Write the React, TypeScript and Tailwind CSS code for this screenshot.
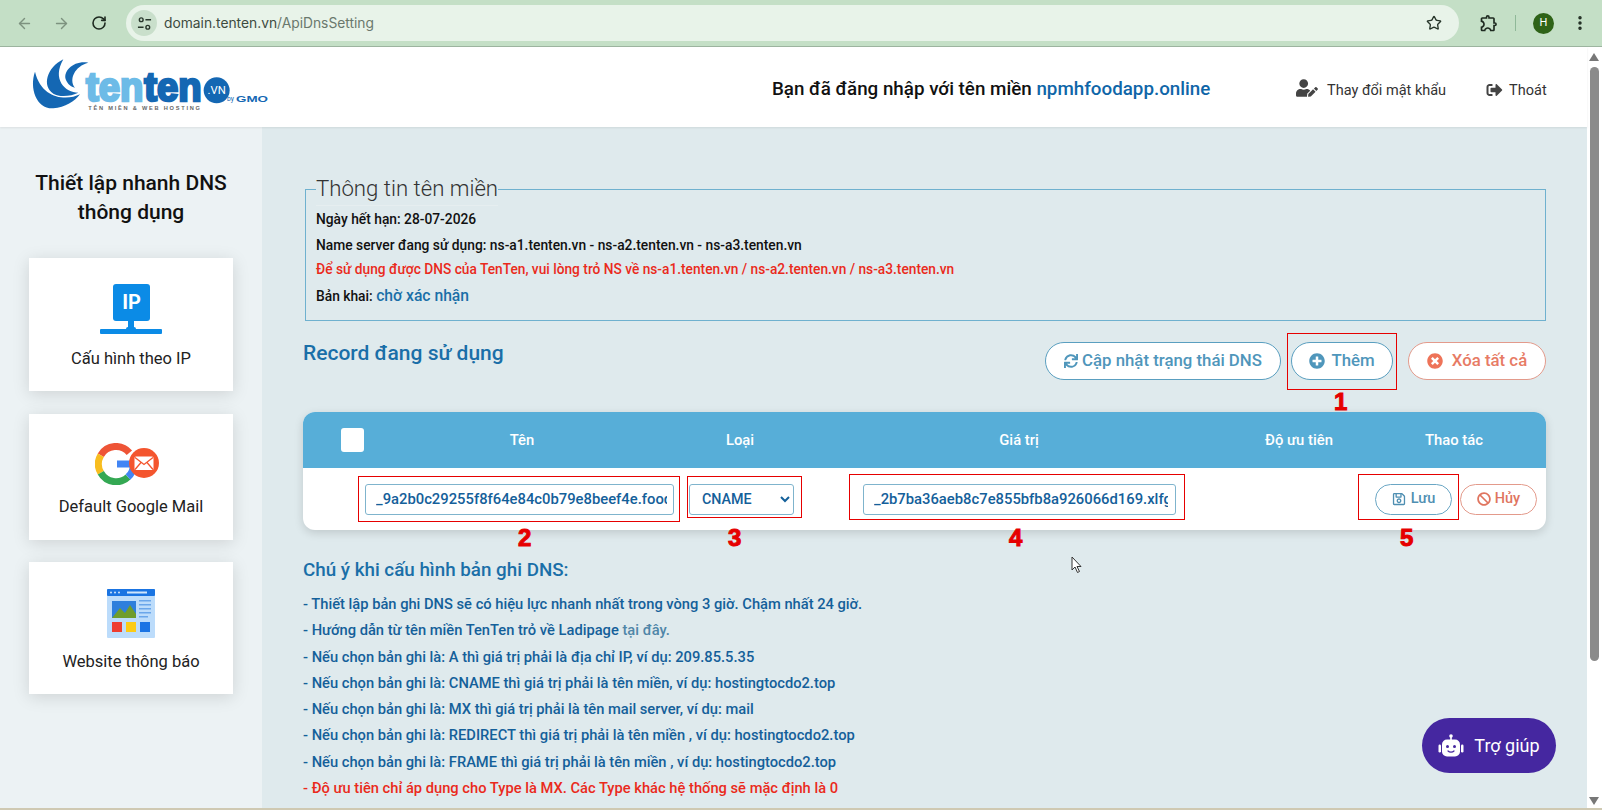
import { ArrowLeft, ArrowRight, EllipsisVertical, RotateCw, Star } from "lucide-react";
import { FaBan, FaPlusCircle, FaRegSave, FaSignOutAlt, FaSync, FaTimesCircle, FaUserEdit } from "react-icons/fa";
import { MdOutlineExtension } from "react-icons/md";

const notes = [
  "- Thiết lập bản ghi DNS sẽ có hiệu lực nhanh nhất trong vòng 3 giờ. Chậm nhất 24 giờ.",
  "- Nếu chọn bản ghi là: A thì giá trị phải là địa chỉ IP, ví dụ: 209.85.5.35",
  "- Nếu chọn bản ghi là: CNAME thì giá trị phải là tên miền, ví dụ: hostingtocdo2.top",
  "- Nếu chọn bản ghi là: MX thì giá trị phải là tên mail server, ví dụ: mail",
  "- Nếu chọn bản ghi là: REDIRECT thì giá trị phải là tên miền , ví dụ: hostingtocdo2.top",
  "- Nếu chọn bản ghi là: FRAME thì giá trị phải là tên miền , ví dụ: hostingtocdo2.top",
];

const marks = [
  { n: "1", box: "left-[1287px] top-[333px] w-[110px] h-[57px]", num: "left-[1334px] top-[388px]" },
  { n: "2", box: "left-[358px] top-[476px] w-[322px] h-[46px]", num: "left-[518px] top-[524px]" },
  { n: "3", box: "left-[687px] top-[476px] w-[115px] h-[42px]", num: "left-[728px] top-[524px]" },
  { n: "4", box: "left-[849px] top-[474px] w-[336px] h-[46px]", num: "left-[1009px] top-[524px]" },
  { n: "5", box: "left-[1358px] top-[474px] w-[101px] h-[46px]", num: "left-[1400px] top-[524px]" },
];

function Logo() {
  return (
    <svg viewBox="0 0 750 195" className="w-[250px] h-[65px] mb-[13px]">
      <path d="M30 62C12 112 35 175 85 172C120 170 150 150 165 130C125 150 50 145 30 62Z" fill="#1467b3" />
      <path d="M115 25C65 50 50 105 85 128C105 140 140 135 160 125C120 125 80 85 115 25Z" fill="#1467b3" />
      <path d="M190 35C145 28 115 60 122 85C128 100 138 108 150 110C130 85 150 45 190 35Z" fill="#1467b3" />
      <text x="183" y="150" fontFamily="Liberation Sans" fontWeight="700" fontSize="122" textLength="172" lengthAdjust="spacingAndGlyphs" fill="#6dbbe7" stroke="#6dbbe7" strokeWidth="8">ten</text>
      <text x="358" y="150" fontFamily="Liberation Sans" fontWeight="700" fontSize="122" textLength="172" lengthAdjust="spacingAndGlyphs" fill="#1467b3" stroke="#1467b3" strokeWidth="8">ten</text>
      <circle cx="575" cy="118" r="39" fill="#1467b3" />
      <text x="575" y="130" textAnchor="middle" fontFamily="Roboto" fontSize="34" fill="#fff">.VN</text>
      <text x="606" y="151" fontFamily="Roboto" fontSize="20" fill="#1467b3">by</text>
      <text x="633" y="152" fontFamily="Liberation Sans" fontWeight="700" fontSize="29" textLength="96" lengthAdjust="spacingAndGlyphs" fill="#1467b3">GMO</text>
      <text x="190" y="178" fontFamily="Liberation Sans" fontWeight="700" fontSize="17" textLength="335" fill="#666">TÊN MIỀN & WEB HOSTING</text>
    </svg>
  );
}

function IpIcon() {
  return (
    <svg viewBox="0 0 62 50" className="w-[62px] h-[50px]">
      <rect x="13" y="0" width="37" height="37" rx="3" fill="#0b8be6" />
      <text x="31.5" y="25" textAnchor="middle" fontFamily="Roboto" fontWeight="700" fontSize="20" fill="#fff">IP</text>
      <rect x="28" y="36" width="6" height="10" fill="#0b8be6" />
      <rect x="0" y="45" width="62" height="5" rx="1" fill="#0b8be6" />
      <rect x="26" y="43" width="10" height="7" rx="2" fill="#0b8be6" />
    </svg>
  );
}

function GoogleMailIcon() {
  return (
    <svg viewBox="0 0 64 42" className="w-[64px] h-[42px] -ml-[8px]">
      <path d="M5.800 12.200A17.500 17.500 0 0 1 34.400 9.800" fill="none" stroke="#ee5436" strokeWidth="7" />
      <path d="M5.800 29.800A17.500 17.500 0 0 1 5.800 12.200" fill="none" stroke="#f8bd1f" strokeWidth="7" />
      <path d="M5.800 29.800A17.500 17.500 0 0 0 33 34" fill="none" stroke="#34a853" strokeWidth="7" />
      <path d="M22 21H38.500C38.500 27 36.500 31 33 34" fill="none" stroke="#4285f4" strokeWidth="7" />
      <circle cx="49" cy="20" r="15" fill="#f4552e" />
      <rect x="39.500" y="13.500" width="19" height="13.500" rx="1.500" fill="#fff" />
      <path d="M40 14.500L49 21.500L58 14.500M40 26.500L46 19.500M58 26.500L52 19.500" fill="none" stroke="#f4552e" strokeWidth="1.300" />
    </svg>
  );
}

function WebIcon() {
  return (
    <svg viewBox="0 0 48 49" className="w-[48px] h-[49px]">
      <rect width="48" height="49" rx="1" fill="#bcdcfb" />
      <rect width="48" height="7" rx="1" fill="#1a74e2" />
      <circle cx="4" cy="3.500" r="1" fill="#cfe5fb" />
      <circle cx="8" cy="3.500" r="1" fill="#cfe5fb" />
      <circle cx="12" cy="3.500" r="1" fill="#cfe5fb" />
      <rect x="20" y="2.500" width="20" height="2" fill="#cfe5fb" />
      <rect x="5" y="12" width="24" height="17" fill="#2e7fdc" />
      <path d="M5 29L13 19L18 24L23 16L29 25V29Z" fill="#6f9d2c" />
      <rect x="32" y="11" width="12" height="1.500" fill="#6aa6ea" />
      <rect x="32" y="15" width="12" height="1.500" fill="#6aa6ea" />
      <rect x="32" y="19" width="12" height="1.500" fill="#6aa6ea" />
      <rect x="32" y="23" width="12" height="1.500" fill="#6aa6ea" />
      <rect x="32" y="27" width="9" height="1.500" fill="#6aa6ea" />
      <rect x="5" y="33" width="10" height="10" fill="#ee3d2f" />
      <rect x="19" y="33" width="10" height="10" fill="#fbcb16" />
      <rect x="33" y="33" width="10" height="10" fill="#1b74e4" />
    </svg>
  );
}

function BotIcon() {
  return (
    <svg viewBox="0 0 26 24" className="w-[26px] h-[24px]">
      <circle cx="13" cy="2" r="1.800" fill="#fff" />
      <rect x="12.200" y="2" width="1.600" height="4" fill="#fff" />
      <rect x="4" y="5.500" width="18" height="17" rx="5" fill="#fff" />
      <rect x="0.500" y="10.500" width="2.500" height="8" rx="1.200" fill="#fff" />
      <rect x="23" y="10.500" width="2.500" height="8" rx="1.200" fill="#fff" />
      <circle cx="9.500" cy="12.500" r="1.500" fill="#4527a0" />
      <circle cx="16.500" cy="12.500" r="1.500" fill="#4527a0" />
      <path d="M10 17C11.500 18.500 14.500 18.500 16 17" fill="none" stroke="#4527a0" strokeWidth="1.200" strokeLinecap="round" />
    </svg>
  );
}

function SideCard({ label, icon, className }: { label: string; icon: React.ReactNode; className: string }) {
  return (
    <div className={`mx-[29px] w-[204px] bg-white shadow-[0_3px_16px_rgba(0,0,0,0.13)] flex flex-col items-center ${className}`}>
      {icon}
      <span className="text-[16.500px] leading-[24px] text-[#222] whitespace-nowrap">{label}</span>
    </div>
  );
}

export default function App() {
  return (
    <div className="relative h-[810px] overflow-hidden flex flex-col bg-white font-['Roboto',sans-serif]">
      {/* browser bar */}
      <div className="h-[47px] shrink-0 bg-[#c4dfc6] border-b border-[#9db5a0] flex items-center pl-[16px] pr-[13px] text-[#3f4f42]">
        <ArrowLeft className="shrink-0 w-[17px] h-[17px] text-[#7d927f]" />
        <ArrowRight className="shrink-0 w-[17px] h-[17px] ml-[20px] text-[#7d927f]" />
        <RotateCw className="shrink-0 w-[16px] h-[16px] ml-[21px] text-[#1e2a20]" strokeWidth={2.400} />
        <div className="shrink-0 ml-[19px] w-[1333px] h-[36px] rounded-full bg-[#e8f3e9] flex items-center pl-[5px] pr-[17px]">
          <div className="w-[26px] h-[26px] rounded-full bg-[#c9dfcb] flex items-center justify-center">
            <svg viewBox="0 0 16 16" className="w-[15px] h-[15px]" fill="none" stroke="#27352a" strokeWidth="1.500">
              <circle cx="4.500" cy="4" r="2" />
              <path d="M9 4H15M1 12H7" />
              <circle cx="11.500" cy="12" r="2" />
            </svg>
          </div>
          <span className="ml-[7px] text-[13.800px] font-['Inter',sans-serif] text-[#3c4a3f]">
            domain.tenten.vn<span className="text-[#6a786d]">/ApiDnsSetting</span>
          </span>
          <Star className="ml-auto w-[16px] h-[16px] text-[#27352a]" />
        </div>
        <MdOutlineExtension className="shrink-0 ml-[20px] w-[20px] h-[20px] text-[#1e2a20]" />
        <div className="shrink-0 ml-[16px] w-px h-[16px] bg-[#8fb898]" />
        <div className="shrink-0 ml-[17px] w-[21px] h-[21px] rounded-full bg-[#2f6318] text-white text-[11px] flex items-center justify-center">H</div>
        <EllipsisVertical className="shrink-0 ml-[17px] w-[18px] h-[18px] text-[#1e2a20]" strokeWidth={2.600} />
      </div>

      <div className="flex-1 flex min-h-0">
        <div className="flex-1 min-w-0 flex flex-col">
          {/* site header */}
          <header className="h-[80px] shrink-0 bg-white flex items-center pl-[25px] pt-[5px] shadow-[0_1px_2px_rgba(0,0,0,0.08)] relative z-10">
            <Logo />
            <div className="ml-[497px] text-[18.800px] font-medium text-[#111] w-[449px] whitespace-nowrap">
              Bạn đã đăng nhập với tên miền <span className="text-[#0f66a8]">npmhfoodapp.online</span>
            </div>
            <FaUserEdit className="ml-[75px] w-[22px] h-[18px] text-[#444] mb-[4px]" />
            <span className="ml-[9px] mt-[3px] text-[14.500px] text-[#333]">Thay đổi mật khẩu</span>
            <FaSignOutAlt className="ml-[40px] w-[17px] h-[16px] text-[#444]" />
            <span className="ml-[6px] mt-[3px] text-[14.500px] text-[#333]">Thoát</span>
          </header>

          <div className="flex-1 min-h-0 flex">
            {/* left column */}
            <aside className="w-[262px] shrink-0 bg-[#ecf2f4] flex flex-col pt-[42px]">
              <h2 className="text-[21px] leading-[29px] font-medium text-[#111] text-center">
                Thiết lập nhanh DNS<br />thông dụng
              </h2>
              <SideCard label="Cấu hình theo IP" icon={<IpIcon />} className="mt-[31px] h-[133px] pt-[26px] gap-[13px]" />
              <SideCard label="Default Google Mail" icon={<GoogleMailIcon />} className="mt-[23px] h-[126px] pt-[29px] gap-[10px]" />
              <SideCard label="Website thông báo" icon={<WebIcon />} className="mt-[22px] h-[132px] pt-[27px] gap-[12px]" />
            </aside>

            {/* main */}
            <main className="flex-1 min-w-0 bg-[#dfeaed] px-[41px] pt-[46px]">
              <fieldset className="ml-[2px] h-[148px] border border-[#6fb1cf] px-[10px]">
                <legend className="text-[22.200px] leading-[30px] font-light text-[#333] border-b border-[#e6eef0] pb-[2px]">Thông tin tên miền</legend>
                <div className="text-[13.800px] font-medium text-[#111]">
                  <p className="leading-[20px] mt-[3px]">Ngày hết hạn: 28-07-2026</p>
                  <p className="leading-[20px] mt-[6px]">Name server đang sử dụng: ns-a1.tenten.vn - ns-a2.tenten.vn - ns-a3.tenten.vn</p>
                  <p className="leading-[20px] mt-[4px] text-[13.730px] text-[#ea2a1c]">Để sử dụng được DNS của TenTen, vui lòng trỏ NS về ns-a1.tenten.vn / ns-a2.tenten.vn / ns-a3.tenten.vn</p>
                  <p className="leading-[20px] mt-[7px]">Bản khai: <span className="text-[15.700px] text-[#1a6fa8]">chờ xác nhận</span></p>
                </div>
              </fieldset>

              <div className="mt-[17px] flex items-start justify-between">
                <h3 className="text-[21px] leading-[30px] font-medium text-[#1a6fa8]">Record đang sử dụng</h3>
                <div className="flex gap-[10px] mt-[4px]">
                  <button className="h-[38px] w-[236px] justify-center rounded-full bg-white border border-[#5a9fc0] text-[#4f96bb] text-[16.800px] font-medium flex items-center gap-[4px] whitespace-nowrap">
                    <FaSync className="w-[14px] h-[14px]" /> Cập nhật trạng thái DNS
                  </button>
                  <button className="h-[38px] w-[102px] mr-[5px] justify-center rounded-full bg-white border border-[#5a9fc0] text-[#4f96bb] text-[16.800px] font-medium flex items-center gap-[6px]">
                    <FaPlusCircle className="w-[16px] h-[16px]" /> Thêm
                  </button>
                  <button className="h-[38px] w-[138px] justify-center rounded-full bg-white border border-[#e39a8b] text-[#e77b65] text-[16.800px] font-medium flex items-center gap-[9px] whitespace-nowrap">
                    <FaTimesCircle className="w-[16px] h-[16px] text-[#ee7358]" /> Xóa tất cả
                  </button>
                </div>
              </div>

              <div className="mt-[32px] rounded-[12px] overflow-hidden bg-white shadow-[0_3px_10px_rgba(0,0,0,0.14)]">
                <div className="h-[56px] bg-[#57aed8] grid grid-cols-[56px_326px_110px_448px_119px_1fr] items-center text-center text-white text-[14.800px] font-medium">
                  <div className="w-[23px] h-[24px] ml-[38px] rounded-[3px] bg-white" />
                  <div>Tên</div>
                  <div>Loại</div>
                  <div>Giá trị</div>
                  <div className="pr-[7px]">Độ ưu tiên</div>
                  <div>Thao tác</div>
                </div>
                <div className="h-[62px] grid grid-cols-[56px_326px_110px_448px_119px_1fr] items-center">
                  <div />
                  <input readOnly value="_9a2b0c29255f8f64e84c0b79e8beef4e.foodapp.online" className="ml-[6px] w-[309px] h-[31px] pl-[10px] pr-[6px] rounded-[3px] border border-[#7fb4cd] text-[14.800px] font-medium text-[#14609a]" />
                  <select className="ml-[4px] w-[105px] h-[31px] pl-[8px] rounded-[3px] border border-[#7fb4cd] bg-white text-[14.300px] font-medium text-[#14609a]">
                    <option>CNAME</option>
                  </select>
                  <input readOnly value="_2b7ba36aeb8c7e855bfb8a926066d169.xlfgrmvvlj.acm-validations.aws" className="ml-[68px] w-[313px] h-[31px] pl-[10px] pr-[7px] rounded-[3px] border border-[#7fb4cd] text-[14.800px] font-medium text-[#14609a]" />
                  <div />
                  <div className="flex justify-end gap-[8px] pr-[9px]">
                    <button className="h-[31px] w-[77px] rounded-full border border-[#6aa6c4] text-[#4f8fb2] text-[14.500px] font-medium flex items-center justify-center gap-[5px]">
                      <FaRegSave className="w-[14px] h-[14px]" /> Lưu
                    </button>
                    <button className="h-[31px] w-[77px] rounded-full border border-[#e39a8b] text-[#e0755f] text-[14.500px] font-medium flex items-center justify-center gap-[4px]">
                      <FaBan className="w-[14px] h-[14px]" /> Hủy
                    </button>
                  </div>
                </div>
              </div>

              <h3 className="mt-[26px] text-[18.800px] leading-[28px] font-medium text-[#1a6fa8]">Chú ý khi cấu hình bản ghi DNS:</h3>
              <div className="mt-[7px] text-[14.700px] leading-[26.300px] font-medium text-[#14609a] whitespace-nowrap">
                <p>{notes[0]}</p>
                <p>- Hướng dẫn từ tên miền TenTen trỏ về Ladipage <span className="text-[#4f86a8]">tại đây.</span></p>
                {notes.slice(1).map((n) => (
                  <p key={n}>{n}</p>
                ))}
                <p className="text-[#ea2a1c]">- Độ ưu tiên chỉ áp dụng cho Type là MX. Các Type khác hệ thống sẽ mặc định là 0</p>
              </div>
            </main>
          </div>
        </div>

        {/* scrollbar */}
        <div className="w-[15px] shrink-0 bg-white flex flex-col items-center pt-[6px] pr-[1px]">
          <div className="w-0 h-0 border-x-[5px] border-x-transparent border-b-[8px] border-b-[#777]" />
          <div className="mt-[6px] w-[9px] h-[594px] rounded-full bg-[#8b8b8b]" />
          <div className="mt-[136px] w-0 h-0 border-x-[5px] border-x-transparent border-t-[8px] border-t-[#777]" />
        </div>
      </div>
      <div className="h-[2px] shrink-0 bg-[#cfc9b2]" />

      {/* red marks drawn over the page */}
      {marks.map((m) => (
        <div key={m.n}>
          <div className={`absolute border border-[#e60000] ${m.box}`} />
          <div className={`absolute text-[24px] leading-[28px] font-bold text-[#e60000] [-webkit-text-stroke:1px_#e60000] font-['Liberation_Sans',sans-serif] ${m.num}`}>{m.n}</div>
        </div>
      ))}

      <svg viewBox="0 0 12 18" className="absolute left-[1071px] top-[556px] w-[12px] h-[18px]">
        <path d="M1 1V14L4 11L6.500 16.500L8.500 15.500L6 10.500H10Z" fill="#fff" stroke="#333" strokeWidth="1" />
      </svg>

      <button className="absolute left-[1422px] top-[718px] w-[134px] h-[55px] rounded-full bg-[#4527a0] text-white text-[18px] flex items-center justify-center gap-[10px]">
        <BotIcon /> Trợ giúp
      </button>
    </div>
  );
}
